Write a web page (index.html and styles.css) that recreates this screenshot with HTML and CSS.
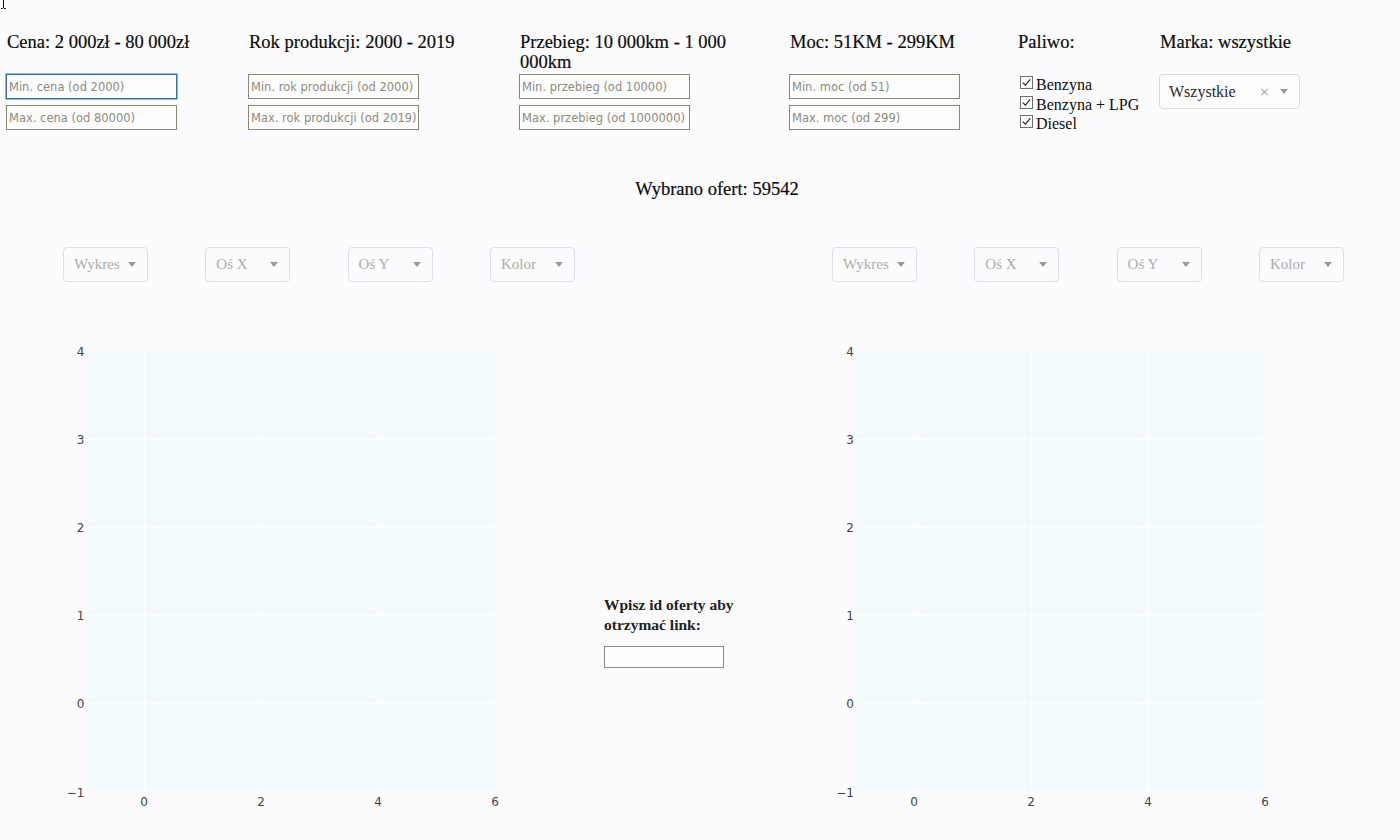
FILE: index.html
```html
<!DOCTYPE html>
<html lang="pl">
<head>
<meta charset="utf-8">
<title>Oferty samochodów</title>
<link rel="stylesheet" href="styles.css">
</head>
<body>
<svg class="cursor" width="8" height="10" viewBox="0 0 8 10"><path d="M3.5 0 V8 M1 8.5 H3 M4 8.5 H6" stroke="#111" stroke-width="1" fill="none"/></svg>

<div class="filters">
  <div class="col col-cena">
    <div class="ftitle">Cena: 2 000zł - 80 000zł</div>
    <div class="inputs">
      <input class="finput focused" type="text" placeholder="Min. cena (od 2000)">
      <input class="finput" type="text" placeholder="Max. cena (od 80000)">
    </div>
  </div>
  <div class="col col-rok">
    <div class="ftitle">Rok produkcji: 2000 - 2019</div>
    <div class="inputs">
      <input class="finput" type="text" placeholder="Min. rok produkcji (od 2000)">
      <input class="finput" type="text" placeholder="Max. rok produkcji (od 2019)">
    </div>
  </div>
  <div class="col col-przebieg">
    <div class="ftitle">Przebieg: 10 000km - 1 000 000km</div>
    <div class="inputs">
      <input class="finput" type="text" placeholder="Min. przebieg (od 10000)">
      <input class="finput" type="text" placeholder="Max. przebieg (od 1000000)">
    </div>
  </div>
  <div class="col col-moc">
    <div class="ftitle">Moc: 51KM - 299KM</div>
    <div class="inputs">
      <input class="finput" type="text" placeholder="Min. moc (od 51)">
      <input class="finput" type="text" placeholder="Max. moc (od 299)">
    </div>
  </div>
  <div class="col col-paliwo">
    <div class="ftitle">Paliwo:</div>
    <ul class="checks">
      <li><svg class="cb" width="13" height="13" viewBox="0 0 13 13"><rect x="0.5" y="0.5" width="12" height="12" fill="#fff" stroke="#6e6e6e"/><path d="M2.8 6.6 L5.4 9.2 L10.2 3.4" fill="none" stroke="#222" stroke-width="1.2"/></svg>Benzyna</li>
      <li><svg class="cb" width="13" height="13" viewBox="0 0 13 13"><rect x="0.5" y="0.5" width="12" height="12" fill="#fff" stroke="#6e6e6e"/><path d="M2.8 6.6 L5.4 9.2 L10.2 3.4" fill="none" stroke="#222" stroke-width="1.2"/></svg>Benzyna + LPG</li>
      <li><svg class="cb" width="13" height="13" viewBox="0 0 13 13"><rect x="0.5" y="0.5" width="12" height="12" fill="#fff" stroke="#6e6e6e"/><path d="M2.8 6.6 L5.4 9.2 L10.2 3.4" fill="none" stroke="#222" stroke-width="1.2"/></svg>Diesel</li>
    </ul>
  </div>
  <div class="col col-marka">
    <div class="ftitle">Marka: wszystkie</div>
    <div class="select">
      <span class="select-value">Wszystkie</span>
      <span class="select-clear">×</span>
      <span class="caret"></span>
    </div>
  </div>
</div>

<div class="summary">Wybrano ofert: 59542</div>

<div class="charts">
  <div class="panel panel-left">
    <div class="dropdowns">
      <div class="dd"><span>Wykres</span><span class="caret"></span></div>
      <div class="dd"><span>Oś X</span><span class="caret"></span></div>
      <div class="dd"><span>Oś Y</span><span class="caret"></span></div>
      <div class="dd"><span>Kolor</span><span class="caret"></span></div>
    </div>
    <svg class="plot" width="460" height="520" viewBox="0 0 460 520">
      <rect x="25" y="52" width="407" height="439" class="plot-bg"/>
      <g class="grid">
        <line x1="81.5" y1="52" x2="81.5" y2="491"/>
        <line x1="198.5" y1="52" x2="198.5" y2="491"/>
        <line x1="315.5" y1="52" x2="315.5" y2="491"/>
        <line x1="25" y1="139.5" x2="432" y2="139.5"/>
        <line x1="25" y1="227.5" x2="432" y2="227.5"/>
        <line x1="25" y1="315.5" x2="432" y2="315.5"/>
        <line x1="25" y1="403.5" x2="432" y2="403.5"/>
      </g>
      <g class="ylab">
        <text x="21.5" y="55.5">4</text>
        <text x="21.5" y="143.5">3</text>
        <text x="21.5" y="231.5">2</text>
        <text x="21.5" y="319.5">1</text>
        <text x="21.5" y="408">0</text>
        <text x="21.5" y="497">−1</text>
      </g>
      <g class="xlab">
        <text x="81" y="506">0</text>
        <text x="198" y="506">2</text>
        <text x="315" y="506">4</text>
        <text x="432" y="506">6</text>
      </g>
    </svg>
  </div>

  <div class="middle">
    <div class="link-label">Wpisz id oferty aby otrzymać link:</div>
    <input class="link-input" type="text">
  </div>

  <div class="panel panel-right">
    <div class="dropdowns">
      <div class="dd"><span>Wykres</span><span class="caret"></span></div>
      <div class="dd"><span>Oś X</span><span class="caret"></span></div>
      <div class="dd"><span>Oś Y</span><span class="caret"></span></div>
      <div class="dd"><span>Kolor</span><span class="caret"></span></div>
    </div>
    <svg class="plot" width="460" height="520" viewBox="0 0 460 520">
      <rect x="24" y="52" width="407" height="439" class="plot-bg"/>
      <g class="grid">
        <line x1="82.5" y1="52" x2="82.5" y2="491"/>
        <line x1="199.5" y1="52" x2="199.5" y2="491"/>
        <line x1="316.5" y1="52" x2="316.5" y2="491"/>
        <line x1="24" y1="139.5" x2="431" y2="139.5"/>
        <line x1="24" y1="227.5" x2="431" y2="227.5"/>
        <line x1="24" y1="315.5" x2="431" y2="315.5"/>
        <line x1="24" y1="403.5" x2="431" y2="403.5"/>
      </g>
      <g class="ylab">
        <text x="22" y="55.5">4</text>
        <text x="22" y="143.5">3</text>
        <text x="22" y="231.5">2</text>
        <text x="22" y="319.5">1</text>
        <text x="22" y="408">0</text>
        <text x="22" y="497">−1</text>
      </g>
      <g class="xlab">
        <text x="82" y="506">0</text>
        <text x="199" y="506">2</text>
        <text x="316" y="506">4</text>
        <text x="433" y="506">6</text>
      </g>
    </svg>
  </div>
</div>
</body>
</html>
```

FILE: styles.css
```css
html, body {
  margin: 0;
  padding: 0;
}

body {
  background: #fcfcfe;
  color: #0c0c0c;
  font-family: "Liberation Serif", "Times New Roman", serif;
  width: 1400px;
  height: 840px;
  overflow: hidden;
  position: relative;
}

.cursor {
  position: absolute;
  left: 0;
  top: 0;
}

/* ---------- filters ---------- */
.filters {
  display: flex;
  align-items: flex-start;
  box-sizing: border-box;
  height: 140px;
  padding: 32px 0 0 6px;
}

.col {
  display: flex;
  flex-direction: column;
}

.col-cena { width: 242px; }
.col-rok { width: 271px; }
.col-przebieg { width: 270px; }
.col-moc { width: 228px; }
.col-paliwo { width: 142px; }
.col-marka { flex: 1; }

.ftitle {
  font-size: 18.5px;
  line-height: 20px;
  min-height: 42px;
  padding-left: 1px;
  max-width: 236px;
  -webkit-text-stroke: 0.2px #0c0c0c;
}

.inputs {
  display: flex;
  flex-direction: column;
  gap: 6px;
}

.finput {
  box-sizing: border-box;
  width: 171px;
  height: 25px;
  margin: 0;
  padding: 0 2px;
  border: 1px solid #8a8a74;
  background: #fdfdfe;
  font-family: "DejaVu Sans", Verdana, sans-serif;
  font-size: 11.5px;
  outline: none;
}

.finput::placeholder {
  color: #8c8c7c;
}

.finput.focused {
  border-color: #3a6f9e;
  box-shadow: 0 0 0 0.5px #3a6f9e;
}

/* checkboxes */
.checks {
  list-style: none;
  margin: 0;
  padding: 1px 0 0 3px;
  font-size: 16px;
  line-height: 19.5px;
}

.checks li {
  display: flex;
  align-items: center;
  gap: 3px;
}

.cb {
  flex: none;
  margin-top: -4px;
}

/* brand select */
.select {
  box-sizing: border-box;
  width: 141px;
  height: 35px;
  border: 1px solid #dcdcd6;
  border-radius: 4px;
  background: #fdfdfe;
  display: flex;
  align-items: center;
  padding: 0 11px 0 9px;
  font-size: 16px;
  color: #2a2a2a;
}

.select-value {
  flex: 1;
}

.select-clear {
  color: #ababab;
  font-family: "DejaVu Sans", sans-serif;
  font-size: 13px;
  margin-right: 10px;
}

.caret {
  width: 0;
  height: 0;
  border-left: 4.5px solid transparent;
  border-right: 4.5px solid transparent;
  border-top: 5px solid #9a9a94;
}

/* ---------- summary ---------- */
.summary {
  margin-top: 37px;
  text-align: center;
  padding-left: 34px;
  font-size: 18.5px;
  line-height: 24px;
  -webkit-text-stroke: 0.2px #0c0c0c;
}

/* ---------- charts ---------- */
.charts {
  display: flex;
  margin-top: 46px;
}

.panel {
  box-sizing: border-box;
  padding-left: 63px;
  display: flex;
  flex-direction: column;
}

.panel-left { width: 604px; }
.panel-right { flex: 1; }

.dropdowns {
  display: flex;
  gap: 57.3px;
}

.dd {
  box-sizing: border-box;
  width: 85px;
  height: 35px;
  border: 1px solid #e0dee6;
  border-radius: 4px;
  display: flex;
  align-items: center;
  justify-content: space-between;
  padding: 0 11px 0 10px;
  font-size: 15px;
  color: #acaca6;
}

.plot {
  display: block;
  margin-top: 18px;
}

.plot-bg {
  fill: #f4fbfd;
}

.grid line {
  stroke: #ffffff;
  stroke-width: 1;
}

.plot text {
  font-family: "DejaVu Sans", Verdana, sans-serif;
  font-size: 12px;
  fill: #444;
}

.ylab text { text-anchor: end; }
.xlab text { text-anchor: middle; }

/* middle link box */
.middle {
  box-sizing: border-box;
  width: 165px;
  padding-top: 348px;
}

.link-label {
  font-size: 15.5px;
  font-weight: bold;
  line-height: 20px;
  color: #222;
  width: 160px;
}

.link-input {
  display: block;
  box-sizing: border-box;
  width: 120px;
  height: 22px;
  margin: 11px 0 0;
  border: 1px solid #8a8a80;
  background: #fdfdfe;
  outline: none;
}
```
